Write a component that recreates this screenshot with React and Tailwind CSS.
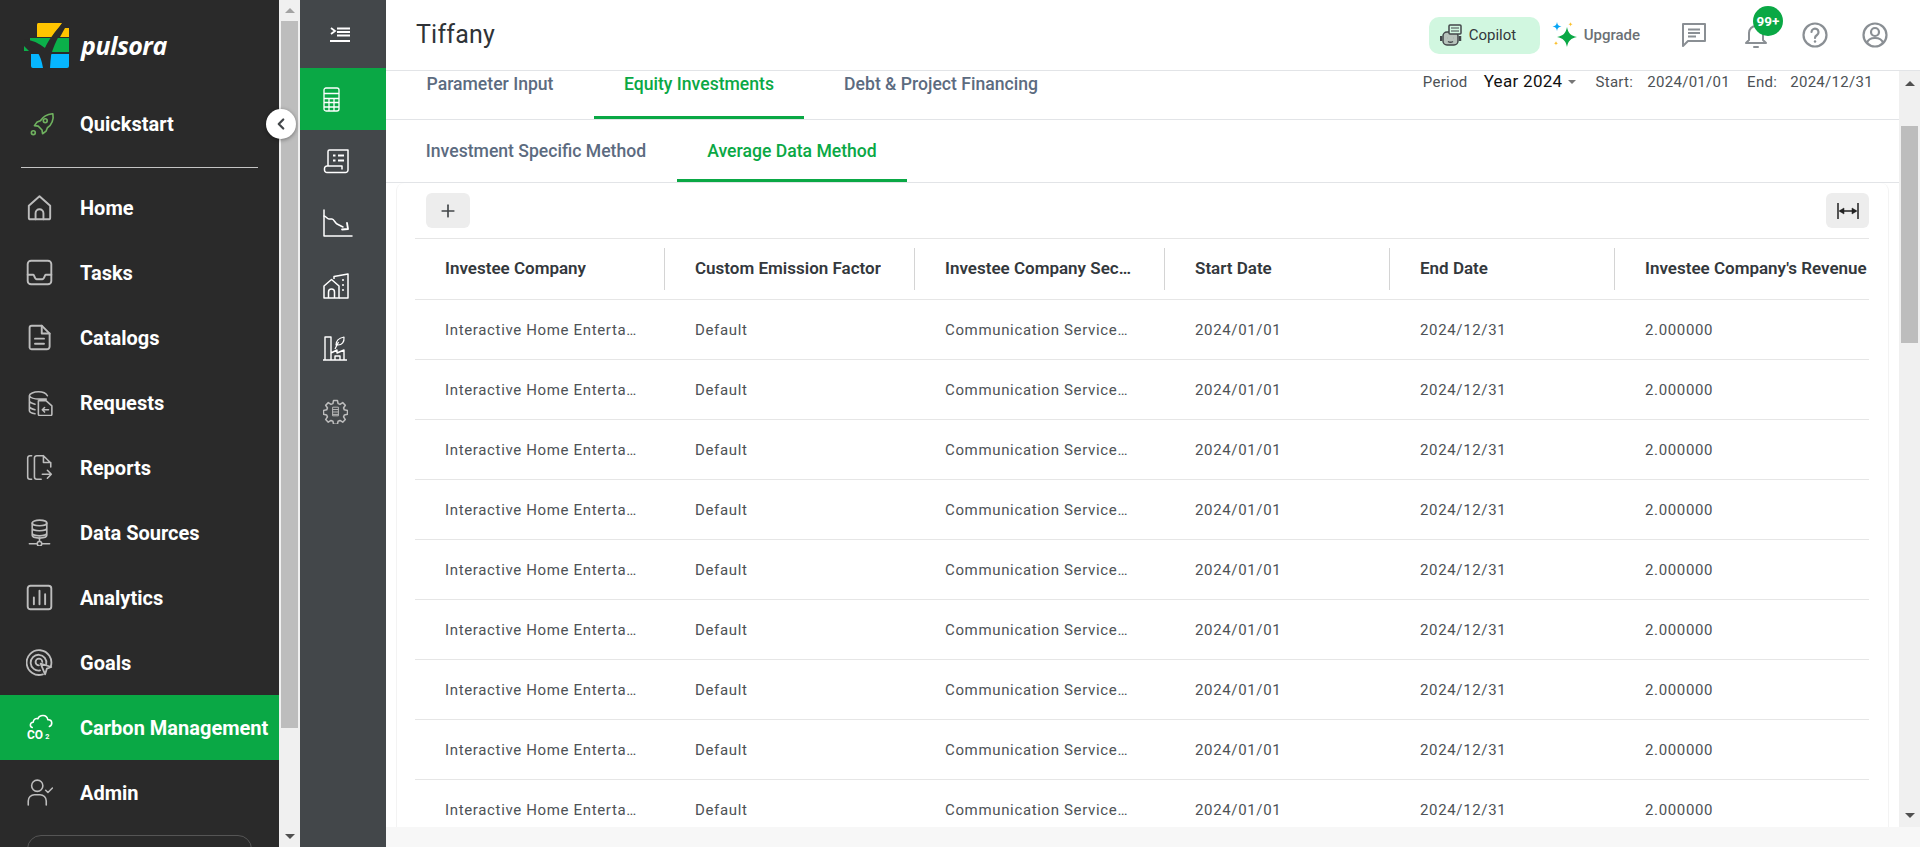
import { Plus, ChevronLeft } from "lucide-react";

const rows = Array.from({ length: 10 }, (_, i) => i);

const columns = [
  { title: "Investee Company", value: "Interactive Home Entertainment", width: "w-[250px]", box: "w-[193px]" },
  { title: "Custom Emission Factor", value: "Default", width: "w-[250px]", box: "w-[190px]" },
  { title: "Investee Company Sector", value: "Communication Services Sector", width: "w-[250px]", box: "w-[187px]" },
  { title: "Start Date", value: "2024/01/01", width: "w-[225px]", box: "w-[170px]" },
  { title: "End Date", value: "2024/12/31", width: "w-[225px]", box: "w-[170px]" },
  { title: "Investee Company's Revenue", value: "2.000000", width: "w-[255px]", box: "w-[190px]" },
];

const Svg = ({ size = 27, stroke = "#bdbdbd", width = 1.7, children }) => (
  <svg width={size} height={size} viewBox="0 0 24 24" fill="none" stroke={stroke} strokeWidth={width} strokeLinecap="round" strokeLinejoin="round">
    {children}
  </svg>
);

const navIcons = {
  rocket: (
    <Svg size={26} stroke="#6fb15f" width={1.5}>
      <path d="M21.5 2.5c-5 .4-8.500 2.500-11 6.500l-3 1.200-2.500 3.300 3.500.5 3.500 3.500.5 3.500 3.300-2.500 1.200-3c4-2.500 6.100-8 5-13z" />
      <circle cx="15" cy="9" r="1.800" />
      <circle cx="4" cy="20" r="1.800" />
    </Svg>
  ),
  home: (
    <Svg>
      <path d="M2.500 10.500 12 2l9.500 8.500V21a1.500 1.500 0 0 1-1.500 1.500H4A1.500 1.500 0 0 1 2.500 21z" />
      <path d="M8.500 22.500V17a3.500 3.500 0 0 1 7 0v5.500" />
    </Svg>
  ),
  tasks: (
    <Svg>
      <rect x="1.500" y="1.500" width="21" height="21" rx="3" />
      <path d="M1.500 14h5c1 0 1 4 3 4h5c2 0 2-4 3-4h5" />
    </Svg>
  ),
  catalogs: (
    <Svg>
      <path d="M5 1.500h9l7 7v11.500a2.500 2.500 0 0 1-2.500 2.500H5A1.800 1.800 0 0 1 3.200 21V3.300A1.800 1.800 0 0 1 5 1.500z" />
      <path d="M14 1.500V8.500h7M8 13h8M8 17.500h8" />
    </Svg>
  ),
  requests: (
    <Svg width={1.4}>
      <path d="M3 6v13c0 1.500 2 2.500 5 3M3 6c0-2 4-3.500 8-3.500S18 4 19 6M3 6c1 2 5 3 9 3h6M3 11c1 1.500 3 2 5 2.500M3 16c1 1.500 3 2 5 2.500" />
      <path d="M11 10.500h7l5 4.500v7.500a1 1 0 0 1-1 1H12a1 1 0 0 1-1-1z" />
      <path d="M20 18.500h-5.500M16.500 16.500l-2 2 2 2" />
    </Svg>
  ),
  reports: (
    <Svg width={1.4}>
      <path d="M5 1.500H3.500A2 2 0 0 0 1.500 3.500v17a2 2 0 0 0 2 2H5" />
      <path d="M15.500 1.500H9.500a2 2 0 0 0-2 2v17a2 2 0 0 0 2 2h4M15.500 1.500 22 8v3.500M15.500 1.500V7.500H22" />
      <path d="M14.500 18h8M19 14.500l3.500 3.500-3.500 3.500" />
    </Svg>
  ),
  sources: (
    <Svg width={1.4}>
      <ellipse cx="12" cy="3.500" rx="6.500" ry="2.500" />
      <path d="M5.500 3.500v11c0 1.400 3 2.500 6.500 2.500s6.500-1.100 6.500-2.500v-11M5.500 8c0 1.400 3 2.500 6.500 2.500s6.500-1.100 6.500-2.500M5.500 12.500c0 1.400 3 2.500 6.500 2.500s6.500-1.100 6.500-2.500" />
      <path d="M12 17v2.500M3 22h6.500M14.500 22H21" />
      <circle cx="12" cy="22" r="2" />
    </Svg>
  ),
  analytics: (
    <Svg>
      <rect x="1.500" y="1.500" width="21" height="21" rx="2.500" />
      <path d="M7 18v-6M12 18V6M17 18v-9" />
    </Svg>
  ),
  goals: (
    <Svg width={1.6}>
      <path d="M22 15.500A11 11 0 1 0 15 22.500" />
      <path d="M18 13.500A7 7 0 1 0 12.500 19" />
      <path d="M14.500 11.500A3 3 0 1 0 11.500 14.500" />
      <path d="m13 13 9.500 3-4 1.500-1.500 5z" />
    </Svg>
  ),
  carbon: (
    <svg width="27" height="27" viewBox="0 0 26 26" fill="none" stroke="#fff" strokeWidth="1.500" strokeLinecap="round" strokeLinejoin="round" className="overflow-visible">
      <path d="M6 13c-2.500-.8-2.500-4.500.8-5C7.500 4.500 10 4 11.500 4.500 13 .5 20 0 21 5.500c4.500-.5 5 5 1.500 6.500" />
      <text x="1" y="24" fill="#fff" stroke="none" fontFamily="Roboto, sans-serif" fontWeight="700" fontSize="11.500">CO</text>
      <text x="18.500" y="24" fill="#fff" stroke="none" fontFamily="Roboto, sans-serif" fontWeight="700" fontSize="7">2</text>
    </svg>
  ),
  admin: (
    <Svg width={1.4}>
      <circle cx="10" cy="6" r="5" />
      <path d="M2 23v-3.500a5.500 5.500 0 0 1 5.500-5.500h5a5.500 5.500 0 0 1 5.500 5.500V23" />
      <path d="m17.500 10 2 2 4-4" />
    </Svg>
  ),
};

const navItems = [
  { label: "Home", icon: "home" },
  { label: "Tasks", icon: "tasks" },
  { label: "Catalogs", icon: "catalogs" },
  { label: "Requests", icon: "requests" },
  { label: "Reports", icon: "reports" },
  { label: "Data Sources", icon: "sources" },
  { label: "Analytics", icon: "analytics" },
  { label: "Goals", icon: "goals" },
  { label: "Carbon Management", icon: "carbon", active: true },
  { label: "Admin", icon: "admin" },
];

const railItems = [
  {
    height: "h-[68px] pl-[30px] pt-[2px]",
    icon: (
      <svg width="20" height="16" viewBox="0 0 20 16" fill="none" stroke="#fff" strokeWidth="1.800">
        <path d="m1 1 4 3-4 3M7 1.500h13M7 5h13M7 8.500h13M0 14h20" />
      </svg>
    ),
  },
  {
    height: "h-[62px] pl-[23px] bg-[#0aa845]",
    icon: (
      <svg width="17" height="25" viewBox="0 0 17 25" fill="none" stroke="#fff" strokeWidth="1.300">
        <rect x="1" y="1" width="15" height="23" rx="2" />
        <path d="M1 6.500h15M1 11.500h15M1 15.500h15M1 20h15M6 11.500V24M11 11.500V24" />
      </svg>
    ),
  },
  {
    height: "h-[62px] pl-[23px]",
    icon: (
      <svg width="26" height="25" viewBox="0 0 26 25" fill="none" stroke="#fff" strokeWidth="1.500" strokeLinejoin="round">
        <path d="M5 17V2.500A1.500 1.500 0 0 1 6.500 1H25v20a2.500 2.500 0 0 1-2.500 2.500H4A2.500 2.500 0 0 1 1.500 21v-1.500A2.500 2.500 0 0 1 4 17h15v3.500" />
        <path d="M10 6.500h2.500M15 6.500h6M10 11.500h2.500M15 11.500h6" strokeWidth="2" />
      </svg>
    ),
  },
  {
    height: "h-[62px] pl-[23px]",
    icon: (
      <svg width="30" height="28" viewBox="0 0 30 28" fill="none" stroke="#fff" strokeWidth="1.500" strokeLinecap="round" strokeLinejoin="round">
        <path d="M1 1v26h28" />
        <path d="M1 7c2 0 3 3 5 3h3c2 0 3 4 5 5l6 3" />
        <path d="m25 20-1-6M25 20l-6 .5" strokeWidth="1.800" />
      </svg>
    ),
  },
  {
    height: "h-[63px] pl-[23px]",
    icon: (
      <svg width="26" height="26" viewBox="0 0 26 26" fill="none" stroke="#fff" strokeWidth="1.500" strokeLinejoin="round">
        <path d="M1 13l7.500-6.500L16 13v12H1zM5.500 25v-6a3 3 0 0 1 6 0v6" />
        <path d="M11 6V3.500L25 1v24h-9" />
        <path d="M19 7h3M19 12h3M19 17h3" strokeDasharray="2 1.500" />
      </svg>
    ),
  },
  {
    height: "h-[62px] pl-[23px]",
    icon: (
      <svg width="24" height="25" viewBox="0 0 24 25" fill="none" stroke="#fff" strokeWidth="1.400" strokeLinejoin="round">
        <path d="M0 24h24M2 24V1h6v23M8 17l6-3v3l7-3v10" />
        <path d="M12 24v-4h5v4" />
        <path d="M13 9c0-4 3-7 8-8 .5 5-2 8-6 8zM12 13l3.500-7" strokeWidth="1.200" />
      </svg>
    ),
  },
  {
    height: "h-[64px] pl-[23px]",
    icon: (
      <svg width="25" height="25" viewBox="0 0 26 26" fill="none" stroke="#bdbdbd" strokeWidth="1.600" strokeLinejoin="round">
        <path d="M11 1.500h4l.7 3.300 2 .8 2.800-1.800 2.700 2.700-1.800 2.800.8 2 3.300.7v3.900l-3.300.7-.8 2 1.800 2.800-2.700 2.700-2.800-1.800-2 .8-.7 3.300h-4l-.7-3.300-2-.8-2.800 1.800-2.700-2.700 1.800-2.800-.8-2-3.300-.7v-3.900l3.300-.7.8-2-1.800-2.800 2.700-2.700 2.800 1.800 2-.8z" />
        <path d="M10 8.500h6v9h-6zM10 11h6M10 13.500h6M10 16h6" strokeWidth="1" />
      </svg>
    ),
  },
];

function Logo() {
  return (
    <div className="flex h-[68px] items-center pl-[24px] pt-[23px]">
      <svg width="46" height="45" viewBox="0 0 46 45">
        <path d="M14 0h24l-4 6-6 8H13V2a2 2 0 0 1 1-2z" fill="#ffc400" />
        <path d="M41 5h4v9h-9z" fill="#ffc400" />
        <path d="M6 15h22l-9 13.500L14 24 6 18zM32 15h13v14H22z" fill="#0bb04a" />
        <path d="M0 23l5 5H0z" fill="#0bb04a" />
        <path d="M7 31h10l3 14H9a2 2 0 0 1-2-2zM27 31h18v12a2 2 0 0 1-2 2H26z" fill="#06b6ff" />
        <path d="M0 20c12 3 17 12 19 25h7c-1-10 3-23 16-45h-3C31 8 24 18 21 25 15 20 8 17 0 16z" fill="#2a2a2a" />
      </svg>
      <span className="ml-[11px] text-[25px] leading-none font-bold italic tracking-[-0.5px] text-white [font-family:'Open_Sans',sans-serif]">pulsora</span>
    </div>
  );
}

function Sidebar() {
  return (
    <aside className="relative w-[279px] flex-none bg-[#2a2a2a] text-[20px] font-bold text-white">
      <Logo />
      <div className="mt-[23px] flex h-[65px] items-center pl-[29px]">
        <span className="flex w-[51px]">{navIcons.rocket}</span>
        Quickstart
      </div>
      <div className="mx-[21px] mt-[11px] h-px bg-[#c4c4c4]" />
      <nav className="mt-[7px]">
        {navItems.map((item) => (
          <div key={item.label} className={`flex h-[65px] items-center pl-[26px] ${item.active ? "bg-[#0aa845]" : ""}`}>
            <span className="flex w-[54px]">{navIcons[item.icon]}</span>
            {item.label}
          </div>
        ))}
      </nav>
      <div className="mx-[27px] mt-[10px] h-[40px] rounded-t-[14px] border border-[#555]" />
    </aside>
  );
}

function Scrollbar({ button, arrowUp, thumb }) {
  return (
    <div className="flex h-full w-[21px] flex-none flex-col items-center bg-[#f0f0f0]">
      <div className={`flex w-full flex-none items-center justify-center ${button}`}>
        <div className={`h-0 w-0 border-x-[5px] border-b-[5px] border-x-transparent ${arrowUp}`} />
      </div>
      <div className={`w-[17px] flex-none bg-[#bdbdbd] ${thumb}`} />
      <div className="flex-1" />
      <div className={`flex w-full flex-none items-center justify-center ${button}`}>
        <div className="h-0 w-0 border-x-[5px] border-t-[5px] border-x-transparent border-t-[#505050]" />
      </div>
    </div>
  );
}

function Rail() {
  return (
    <div className="w-[86px] flex-none bg-[#43474a]">
      {railItems.map((item, i) => (
        <div key={i} className={`flex items-center ${item.height}`}>
          {item.icon}
        </div>
      ))}
    </div>
  );
}

function TopBar() {
  return (
    <header className="flex h-[71px] flex-none items-center border-b border-[#e2e4e7] bg-white pl-[30px] shadow-[0_1px_3px_rgba(0,0,0,0.08)]">
      <h1 className="text-[25px] font-normal tracking-[0.2px] text-[#2f3337]">Tiffany</h1>
      <div className="flex-1" />
      <div className="flex h-[37px] w-[111px] items-center rounded-[10px] bg-[#d1f7e0] pl-[11px] text-[15px] text-[#33383c]">
        <svg width="22" height="24" viewBox="0 0 22 24" fill="none" stroke="#43474a" strokeWidth="1.500" strokeLinejoin="round">
          <rect x="3" y="9" width="15" height="13" rx="4" fill="#b7c2bb" />
          <path d="M1 13v5M20 13v5" strokeWidth="2.500" />
          <rect x="9" y="2" width="12" height="9" rx="1" fill="#d1f7e0" />
          <path d="M11 5h8M11 8h8" strokeWidth="1" />
          <path d="M7.500 15h.1M13.500 15h.1M8 18.500c1.500 1 3.500 1 5 0" />
        </svg>
        <span className="ml-[7px]">Copilot</span>
      </div>
      <svg className="ml-[12px]" width="26" height="26" viewBox="0 0 26 26">
        <path d="M15 5c1 6 4 9 10 10-6 1-9 4-10 10-1-6-4-9-10-10 6-1 9-4 10-10z" fill="#0aa845" />
        <path d="M5 0c.5 3 1.500 4 4.500 4.500C6.500 5 5.500 6 5 9c-.5-3-1.500-4-4.500-4.500C3.500 4 4.500 3 5 0z" fill="#06a5f5" />
        <path d="M18.500 0c.3 1.500.7 2 2.200 2.200-1.500.3-1.900.7-2.200 2.300-.3-1.600-.7-2-2.200-2.300C17.800 2 18.200 1.500 18.500 0zM4 19c.3 1.500.7 2 2.200 2.200-1.500.3-1.900.7-2.200 2.300-.3-1.600-.7-2-2.200-2.300C3.300 21 3.700 20.500 4 19z" fill="#fbc02d" />
      </svg>
      <span className="ml-[6px] text-[15px] font-medium text-[#6b7075]">Upgrade</span>
      <svg className="ml-[40px]" width="28" height="28" viewBox="0 0 28 28" fill="none" stroke="#8a8f94" strokeWidth="2">
        <path d="M3 3h22v17H8l-5 5z" strokeLinejoin="round" />
        <path d="M8 8.500h12M8 12h12M8 15.500h8" strokeWidth="1.800" />
      </svg>
      <span className="relative ml-[36px] flex">
        <svg width="24" height="28" viewBox="0 0 24 28" fill="none" stroke="#8a8f94" strokeWidth="2">
          <path d="M2 22h20l-3-3v-7c0-4-3-7-7-7s-7 3-7 7v7z" strokeLinejoin="round" />
          <path d="M10 26h4" strokeLinecap="round" />
        </svg>
        <span className="absolute left-[9px] top-[-15px] flex h-[30px] w-[30px] items-center justify-center rounded-full bg-[#0aa845] text-[13.5px] font-bold text-white">99+</span>
      </span>
      <svg className="ml-[33px]" width="28" height="28" viewBox="0 0 28 28" fill="none" stroke="#8a8f94" strokeWidth="2.200" strokeLinecap="round">
        <circle cx="14" cy="14" r="11.500" />
        <path d="M10.500 11a3.500 3.500 0 1 1 5.500 3c-1.300.9-2 1.500-2 3" />
        <path d="M14 20.500v.1" strokeWidth="2.500" />
      </svg>
      <svg className="ml-[32px] mr-[31px]" width="28" height="28" viewBox="0 0 28 28" fill="none" stroke="#8a8f94" strokeWidth="2.200">
        <circle cx="14" cy="14" r="11.500" />
        <circle cx="14" cy="11" r="4" />
        <path d="M6 22c1-3.500 4-5 8-5s7 1.500 8 5" />
      </svg>
    </header>
  );
}

function Tab({ active, width, children }) {
  return (
    <div className={`flex h-full items-start justify-center border-b-[3px] text-[17.6px] font-medium ${width} ${active ? "border-[#0aa845] text-[#0aa845]" : "border-transparent text-[#5c6b80]"}`}>
      {children}
    </div>
  );
}

function Table() {
  return (
    <div className="ml-[18px] mr-[19px]">
      <div className="flex h-[62px] items-center border-y border-[#e6e6e6]">
        {columns.map((col, i) => (
          <div key={col.title} className={`flex h-[42px] flex-none items-center pl-[30px] text-[17px] font-semibold text-[#33383c] ${col.width} ${i < 5 ? "border-r border-[#d4d4d4] pr-[30px]" : ""}`}>
            <span className="block truncate">{col.title}</span>
          </div>
        ))}
      </div>
      {rows.map((row) => (
        <div key={row} className="flex h-[60px] items-center border-b border-[#e6e6e6] pt-[1px] text-[15px] tracking-[0.65px] text-[#4d5256]">
          {columns.map((col) => (
            <div key={col.title} className={`flex-none pl-[30px] ${col.width}`}>
              <div className={`truncate ${col.box}`}>{col.value}</div>
            </div>
          ))}
        </div>
      ))}
    </div>
  );
}

function Content() {
  return (
    <div className="min-w-0 flex-1 overflow-hidden bg-white">
      <div className="flex h-[49px] border-b border-[#e2e4e7]">
        <div className="flex h-full">
          <Tab width="w-[208px]">Parameter Input</Tab>
          <Tab active width="w-[210px]">Equity Investments</Tab>
          <Tab width="w-[274px]">Debt & Project Financing</Tab>
        </div>
        <div className="flex-1" />
        <div className="mr-[26px] flex h-[22px] items-center text-[15px] tracking-[0.3px] text-[#4d5256]">
          <span>Period</span>
          <span className="ml-[16px] text-[17px] text-[#111]">Year 2024</span>
          <span className="ml-[6px] h-0 w-0 border-x-[4px] border-t-[4px] border-x-transparent border-t-[#777]" />
          <span className="ml-[19px]">Start:</span>
          <span className="ml-[14px]">2024/01/01</span>
          <span className="ml-[17px]">End:</span>
          <span className="ml-[13px]">2024/12/31</span>
        </div>
      </div>
      <div className="flex h-[63px] border-b border-[#e2e4e7] pt-[18px]">
        <Tab width="w-[291px] pl-[9px]">Investment Specific Method</Tab>
        <Tab active width="w-[230px]">Average Data Method</Tab>
      </div>
      <div className="mx-[10px] h-[700px] rounded-t-[8px] border-x border-[#f3f3f3] pt-[10px]">
        <div className="mb-[10px] ml-[29px] mr-[19px] flex justify-between">
          <div className="flex h-[35px] w-[44px] items-center justify-center rounded-[6px] bg-[#ededed] text-[#43474a]">
            <Plus size={20} strokeWidth={2} />
          </div>
          <div className="flex h-[35px] w-[43px] items-center justify-center rounded-[6px] bg-[#ededed]">
            <svg width="24" height="20" viewBox="0 0 24 20" fill="#222" stroke="#222" strokeWidth="1.800">
              <path d="M2 2v16M22 2v16M4 10h16" strokeWidth="1.500" />
              <path d="M3 10l5-3v6zM21 10l-5-3v6z" strokeWidth="0.500" />
            </svg>
          </div>
        </div>
        <Table />
      </div>
    </div>
  );
}

export default function App() {
  return (
    <div className="relative flex h-[847px] w-[1920px] overflow-hidden bg-white [font-family:Roboto,sans-serif]">
      <Sidebar />
      <Scrollbar button="h-[21px]" arrowUp="border-b-[#a3a3a3]" thumb="h-[707px]" />
      <Rail />
      <main className="flex min-w-0 flex-1 flex-col">
        <TopBar />
        <div className="flex min-h-0 flex-1">
          <Content />
          <Scrollbar button="h-[24px]" arrowUp="border-b-[#505050]" thumb="mt-[31px] h-[217px]" />
        </div>
        <div className="h-[20px] flex-none bg-[#f7f7f7]" />
      </main>
      <button className="absolute left-[266px] top-[109px] flex h-[30px] w-[30px] items-center justify-center rounded-full bg-white shadow-[0_1px_4px_rgba(0,0,0,0.4)]">
        <ChevronLeft size={18} strokeWidth={3} color="#43474a" />
      </button>
    </div>
  );
}
